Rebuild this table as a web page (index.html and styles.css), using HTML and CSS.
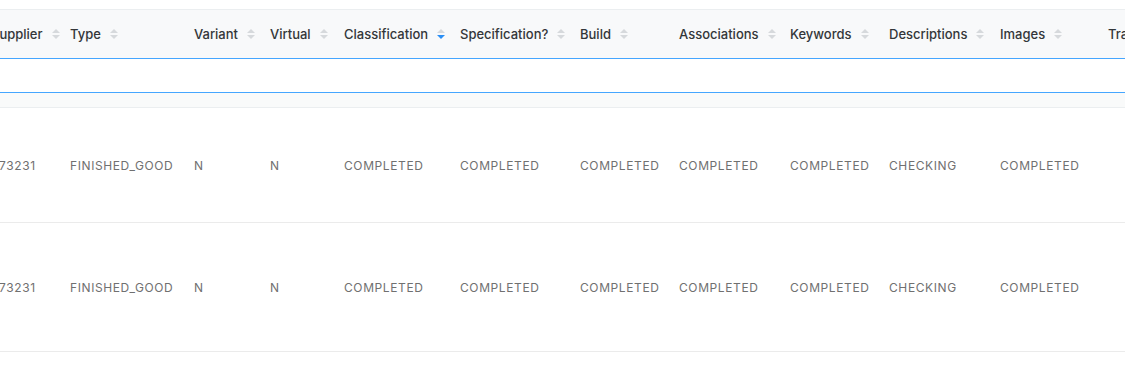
FILE: index.html
```html
<!DOCTYPE html>
<html>
<head>
<meta charset="utf-8">
<link rel="stylesheet" href="styles.css">
</head>
<body>
<div class="table-wrap">
  <div class="table">
    <div class="head-row cols">
      <div class="th"><span>Supplier</span><svg class="sort" viewBox="0 0 8 12" width="8" height="12"><polygon class="up" points="0,5 4,1 8,5"/><polygon class="down" points="0,7 4,11 8,7"/></svg></div>
      <div class="th"><span>Type</span><svg class="sort" viewBox="0 0 8 12" width="8" height="12"><polygon class="up" points="0,5 4,1 8,5"/><polygon class="down" points="0,7 4,11 8,7"/></svg></div>
      <div class="th"><span>Variant</span><svg class="sort" viewBox="0 0 8 12" width="8" height="12"><polygon class="up" points="0,5 4,1 8,5"/><polygon class="down" points="0,7 4,11 8,7"/></svg></div>
      <div class="th"><span>Virtual</span><svg class="sort" viewBox="0 0 8 12" width="8" height="12"><polygon class="up" points="0,5 4,1 8,5"/><polygon class="down" points="0,7 4,11 8,7"/></svg></div>
      <div class="th"><span>Classification</span><svg class="sort" viewBox="0 0 8 12" width="8" height="12"><polygon class="up" points="0,5 4,1 8,5"/><polygon class="down active" points="0,7 4,11 8,7"/></svg></div>
      <div class="th"><span>Specification?</span><svg class="sort" viewBox="0 0 8 12" width="8" height="12"><polygon class="up" points="0,5 4,1 8,5"/><polygon class="down" points="0,7 4,11 8,7"/></svg></div>
      <div class="th"><span>Build</span><svg class="sort" viewBox="0 0 8 12" width="8" height="12"><polygon class="up" points="0,5 4,1 8,5"/><polygon class="down" points="0,7 4,11 8,7"/></svg></div>
      <div class="th"><span>Associations</span><svg class="sort" viewBox="0 0 8 12" width="8" height="12"><polygon class="up" points="0,5 4,1 8,5"/><polygon class="down" points="0,7 4,11 8,7"/></svg></div>
      <div class="th"><span>Keywords</span><svg class="sort" viewBox="0 0 8 12" width="8" height="12"><polygon class="up" points="0,5 4,1 8,5"/><polygon class="down" points="0,7 4,11 8,7"/></svg></div>
      <div class="th"><span>Descriptions</span><svg class="sort" viewBox="0 0 8 12" width="8" height="12"><polygon class="up" points="0,5 4,1 8,5"/><polygon class="down" points="0,7 4,11 8,7"/></svg></div>
      <div class="th"><span>Images</span><svg class="sort" viewBox="0 0 8 12" width="8" height="12"><polygon class="up" points="0,5 4,1 8,5"/><polygon class="down" points="0,7 4,11 8,7"/></svg></div>
      <div class="th"><span>Translations</span></div>
    </div>
    <div class="filter-row"></div>
    <div class="gap-row"></div>
    <div class="row row-a cols">
      <div class="td">873231</div>
      <div class="td">FINISHED_GOOD</div>
      <div class="td">N</div>
      <div class="td">N</div>
      <div class="td">COMPLETED</div>
      <div class="td">COMPLETED</div>
      <div class="td">COMPLETED</div>
      <div class="td">COMPLETED</div>
      <div class="td">COMPLETED</div>
      <div class="td">CHECKING</div>
      <div class="td">COMPLETED</div>
      <div class="td"></div>
    </div>
    <div class="row row-b cols">
      <div class="td">873231</div>
      <div class="td">FINISHED_GOOD</div>
      <div class="td">N</div>
      <div class="td">N</div>
      <div class="td">COMPLETED</div>
      <div class="td">COMPLETED</div>
      <div class="td">COMPLETED</div>
      <div class="td">COMPLETED</div>
      <div class="td">COMPLETED</div>
      <div class="td">CHECKING</div>
      <div class="td">COMPLETED</div>
      <div class="td"></div>
    </div>
  </div>
</div>
</body>
</html>
```

FILE: styles.css
```css
html, body {
  margin: 0;
  padding: 0;
  background: #fff;
  font-family: Inter, "Noto Sans", "Liberation Sans", sans-serif;
}

.table-wrap {
  width: 1125px;
  height: 368px;
  overflow: hidden;
  padding-top: 9px;
  box-sizing: border-box;
}

.table {
  border-top: 1px solid #ebeef0;
  margin-left: -9px;
  width: 1250px;
}

.cols {
  display: grid;
  grid-template-columns: 79px 124px 76px 74px 116px 120px 99px 111px 99px 111px 108px 130px;
}

.head-row {
  height: 48px;
  background: #f8f9fa;
  align-items: center;
}

.th {
  display: flex;
  align-items: center;
  gap: 9px;
  font-size: 13px;
  font-weight: 500;
  color: #333639;
  white-space: nowrap;
}

.sort {
  display: block;
  margin-top: -1px;
}

.sort polygon {
  fill: #d6d9dc;
}

.sort polygon.active {
  fill: #2b8ff5;
}

.filter-row {
  height: 33px;
  border-top: 1px solid #45a6ff;
  border-bottom: 1px solid #45a6ff;
  background: #fff;
}

.gap-row {
  height: 14px;
  background: #f9fafa;
  border-bottom: 1px solid #ebeef0;
}

.row {
  align-items: center;
  border-bottom: 1px solid #ebebeb;
}

.row-a {
  height: 114px;
}

.row-b {
  height: 128px;
}

.td {
  font-size: 12px;
  letter-spacing: 0.6px;
  color: #707070;
  white-space: nowrap;
}
```
